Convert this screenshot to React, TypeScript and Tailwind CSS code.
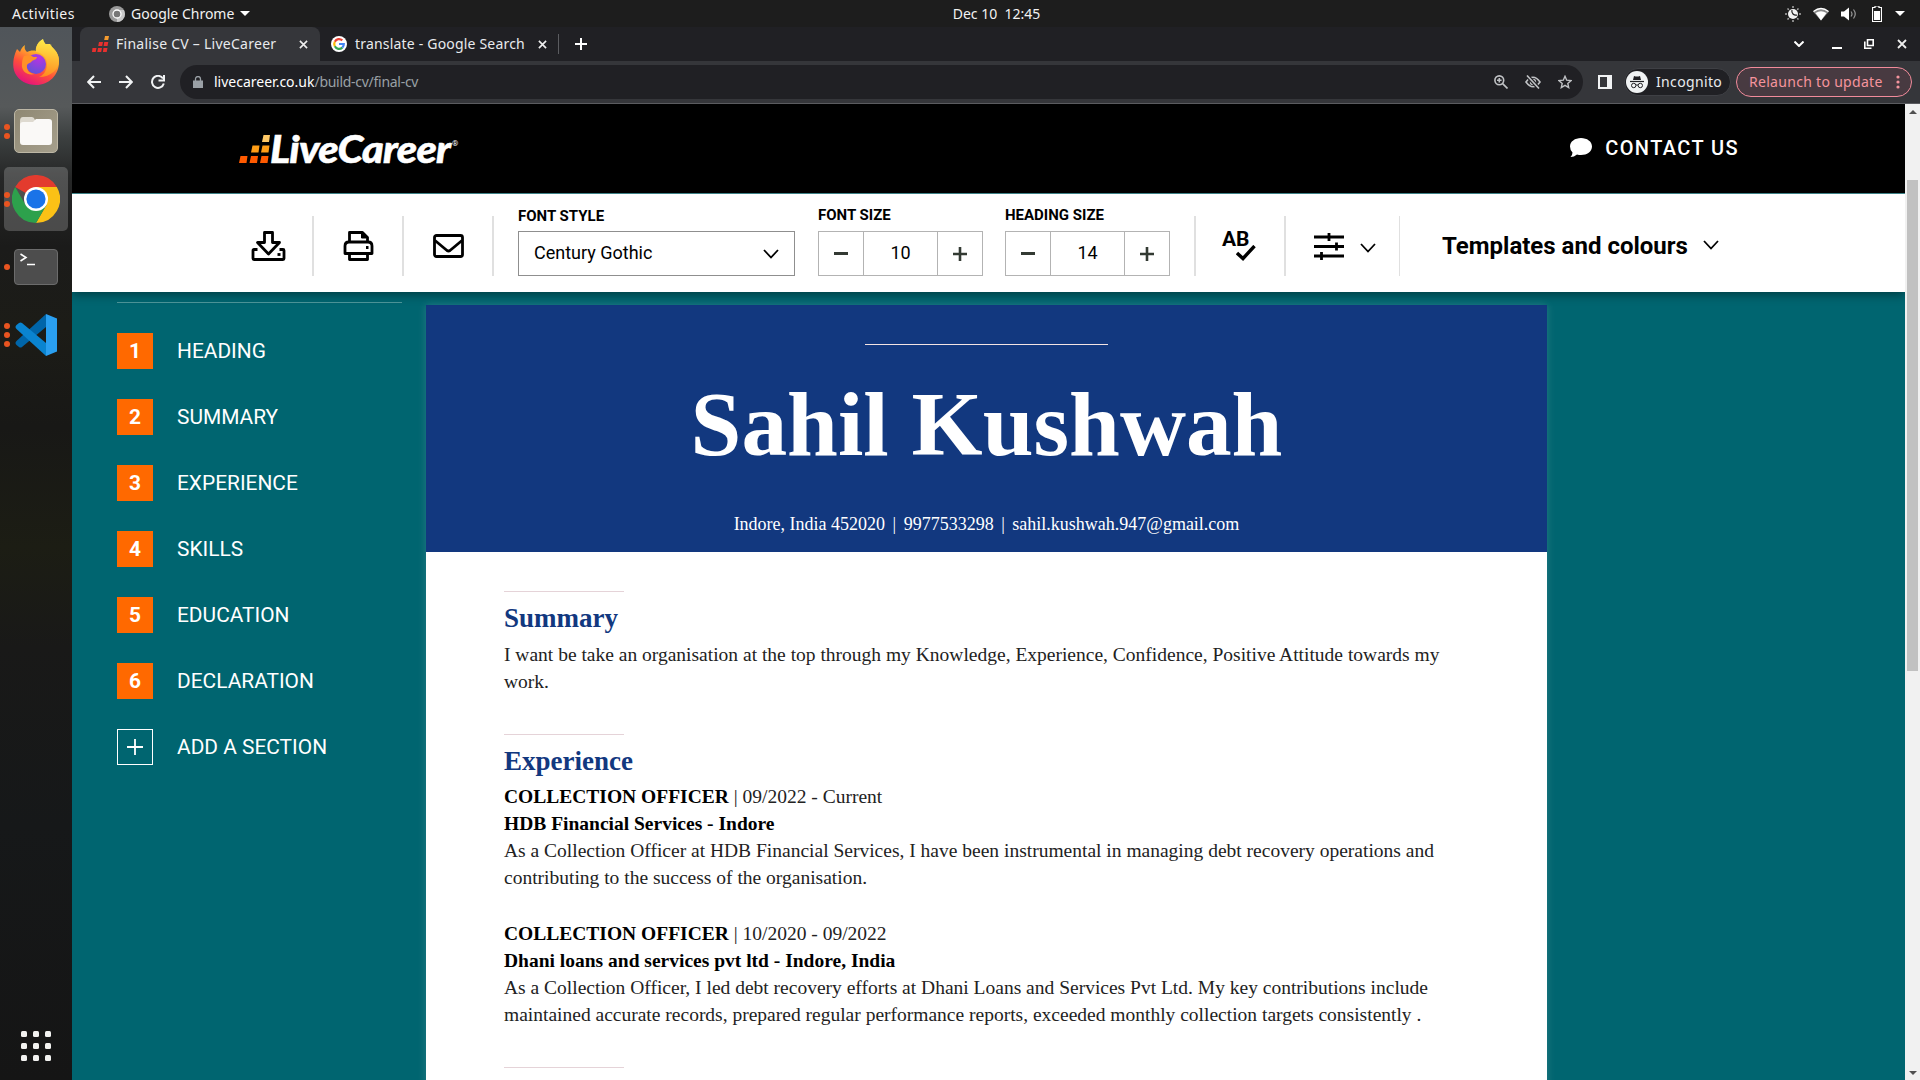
import React from "react";

const UI = "font-['Noto_Sans',sans-serif]";

const sections = ["HEADING", "SUMMARY", "EXPERIENCE", "SKILLS", "EDUCATION", "DECLARATION"];

function Chevron({ className }: { className?: string }) {
  return (
    <svg viewBox="0 0 16 10" className={className} fill="none" stroke="currentColor" strokeWidth="1.800">
      <path d="M1 1l7 7.5L15 1" />
    </svg>
  );
}

function Dots({ n }: { n: number }) {
  return (
    <div className="absolute left-[4px] top-0 bottom-0 flex flex-col justify-center gap-[3px]">
      {Array.from({ length: n }, (_, i) => (
        <i key={i} className="block size-[6px] rounded-full bg-[#e95420]" />
      ))}
    </div>
  );
}

function Dock() {
  return (
    <aside className="relative flex w-[72px] shrink-0 flex-col items-center bg-[linear-gradient(180deg,#50555a_0px,#56595a_80px,#3c4040_110px,#262727_150px,#1b1b1a_220px,#1c1c17_300px,#181816_400px,#1c1d14_520px,#191918_620px,#161819_800px,#151515_1053px)]">
      <div className="flex h-[72px] items-center justify-center">
        <svg viewBox="0 0 48 48" className="size-[48px]">
          <defs>
            <linearGradient id="fx" x1="0.8" y1="0" x2="0.3" y2="1">
              <stop offset="0" stopColor="#fff44f" />
              <stop offset=".35" stopColor="#ffb02a" />
              <stop offset=".65" stopColor="#ff4f3a" />
              <stop offset="1" stopColor="#e3107f" />
            </linearGradient>
            <linearGradient id="fy" x1="0.6" y1="0" x2="0.5" y2="1">
              <stop offset="0" stopColor="#fff04a" />
              <stop offset="1" stopColor="#ff8a20" />
            </linearGradient>
            <radialGradient id="fp" cx=".65" cy=".2" r=".9">
              <stop offset="0" stopColor="#b833e1" />
              <stop offset="1" stopColor="#5b54d6" />
            </radialGradient>
          </defs>
          <path d="M5 10c-4 8-5 17-2 24 4 8 12 12 21 12 13 0 23-10 23-23 0-6-2-10-5-13-2-2-4-4-4-5l-6 0C30 6 30 2 31 0c-5 3-7 7-7 12-3-1-7 0-9 1-2-2-3-4-2-7-3 2-4 4-5 7-1-1-2-2-3-3z" fill="url(#fx)" />
          <path d="M31 0c-5 3-8 8-7 13 7 1 11 6 11 12 0 8-5 12-8 13 12 0 20-8 20-16 0-6-3-10-6-13-1-1-2-2-2-4-1 1-1 2-1 4-3-2-6-5-7-9z" fill="url(#fy)" />
          <circle cx="24" cy="25" r="10" fill="url(#fp)" />
          <path d="M12 17c3-1 8-1 9 1h4c0 2-3 3-5 4-1 2-4 2-5 4-1 5 3 9 8 9-9 2-14-4-13-10 0-4 1-6 2-8z" fill="#ff9128" />
        </svg>
      </div>
      <div className="relative flex h-[64px] w-full items-center justify-center">
        <Dots n={2} />
        <div className="flex h-[44px] w-[44px] items-center justify-center rounded-[5px] border border-[#bdb7a5] bg-[linear-gradient(135deg,#8f8873,#a59f8c)]">
          <svg viewBox="0 0 32 28" className="h-[28px] w-[32px]">
            <path d="M0 4q0-4 3-4h9q2 0 3 3l1 2h13v16H0z" fill="#dedad0" />
            <path d="M0 8q0-3 3-3h10l3-3h13q3 0 3 3v20q0 3-3 3H3q-3 0-3-3z" fill="#faf9f7" />
          </svg>
        </div>
      </div>
      <div className="relative mt-[4px] flex h-[64px] w-full items-center justify-center">
        <div className="flex size-[64px] items-center justify-center rounded-[5px] bg-white/20">
          <svg viewBox="0 0 48 48" className="size-[48px]">
            <path d="M24 24L3.2 12A24 24 0 0 1 44.8 12z" fill="#e33b2e" />
            <path d="M24 12h20.8A24 24 0 0 1 24 48l10.4-18z" fill="#fbc116" />
            <path d="M13.6 30L3.2 12A24 24 0 0 0 24 48l10.4-18z" fill="#2da14c" />
            <circle cx="24" cy="24" r="12" fill="#fff" />
            <circle cx="24" cy="24" r="9.6" fill="#1a73e8" />
          </svg>
        </div>
        <Dots n={2} />
      </div>
      <div className="relative mt-[4px] flex h-[64px] w-full items-center justify-center">
        <Dots n={1} />
        <div className="h-[36px] w-[44px] rounded-[4px] border border-[#6c6c6c] bg-[#4d4d4d]">
          <svg viewBox="0 0 42 34" className="h-[34px] w-[42px]" fill="none" stroke="#fff" strokeWidth="1.6">
            <path d="M5.500 4l5.500 3.500L5.500 11M12 14.500h8" />
          </svg>
        </div>
      </div>
      <div className="relative mt-[4px] flex h-[64px] w-full items-center justify-center">
        <Dots n={3} />
        <svg viewBox="0 0 42 42" className="size-[42px]">
          <path d="M31 0L1.500 27q-2 2 0 4l2.500 2q1.500 1 3 0L31 13z" fill="#0065a9" />
          <path d="M31 42L1.500 15q-2-2 0-4L4 9q1.500-1 3 0l24 20z" fill="#0a84d0" />
          <path d="M31 0l11 4.500v33L31 42z" fill="#2a9ff0" />
        </svg>
      </div>
      <div className="mt-auto mb-[19px] grid grid-cols-3 gap-[6px]">
        {Array.from({ length: 9 }, (_, i) => (
          <i key={i} className="block size-[6px] rounded-[1.5px] bg-[#f2f2f0]" />
        ))}
      </div>
    </aside>
  );
}

function TopBar() {
  return (
    <header className={`${UI} grid h-[27px] grid-cols-3 items-center bg-[#1d1d1d] text-[14px] text-[#f2f2f2]`}>
      <div className="flex items-center pl-[12px]">
        <span className="w-[97px] whitespace-nowrap tracking-[0.45px]">Activities</span>
        <svg viewBox="0 0 16 16" className="size-[16px]">
          <circle cx="8" cy="8" r="8" fill="#9a9a9a" />
          <path d="M8 16A8 8 0 0 0 16 8l-1-4H8z" fill="#c9c9c9" />
          <circle cx="8" cy="8" r="4" fill="#777" stroke="#fff" strokeWidth="1.300" />
        </svg>
        <span className="ml-[6px] whitespace-nowrap">Google Chrome</span>
        <i className="ml-[6px] border-x-[5px] border-t-[5px] border-x-transparent border-t-white" />
      </div>
      <div className="pb-px pl-[73px] text-center whitespace-pre">Dec 10  12:45</div>
      <div className="flex items-center justify-end pr-[15px]">
        <svg viewBox="0 0 16 16" className="mr-[12px] size-[16px]">
          <circle cx="8" cy="8" r="5" fill="#f2f2f2" />
          <path d="M7 4a4 4 0 0 0 5 5" fill="none" stroke="#1d1d1d" strokeWidth="1.200" />
          <path d="M8 0v2M8 14v2M0 8h2M14 8h2M2.500 2.500l1.300 1.300M12.200 12.200l1.300 1.300M2.500 13.500l1.300-1.300M12.200 3.800l1.300-1.300" stroke="#aaa" strokeWidth="1.500" />
        </svg>
        <svg viewBox="0 0 16 14" className="mr-[12px] h-[14px] w-[16px]">
          <path d="M0 4.500Q8-2 16 4.500L8 13.500z" fill="#888" />
          <path d="M2.500 6Q8 2.500 13.500 6L8 13.500z" fill="#fff" />
          <path d="M.5 4.500Q8-1.500 15.500 4.500" fill="none" stroke="#fff" strokeWidth="1.300" />
        </svg>
        <svg viewBox="0 0 16 14" className="mr-[15px] h-[14px] w-[16px]">
          <path d="M0 4.500h3L8 .5v13L3 9.500H0z" fill="#fff" />
          <path d="M10 4.500q2 2.500 0 5M12.500 2.500q3.500 4.500 0 9" fill="none" stroke="#999" strokeWidth="1.200" />
        </svg>
        <svg viewBox="0 0 10 16" className="mr-[13px] h-[16px] w-[10px]">
          <path d="M3 0h4v1.500h2.500v14h-9v-14H3z" fill="none" stroke="#fff" strokeWidth="1.200" />
          <path d="M2 5h6v9H2z" fill="#fff" />
        </svg>
        <i className="border-x-[5px] border-t-[5px] border-x-transparent border-t-white" />
      </div>
    </header>
  );
}

function X({ className }: { className?: string }) {
  return (
    <svg viewBox="0 0 10 10" className={className} stroke="#eee" strokeWidth="1.800">
      <path d="M1 1l8 8M9 1L1 9" />
    </svg>
  );
}

function TabStrip() {
  return (
    <div className={`${UI} flex h-[34px] items-center bg-[#202024] pl-[8px] text-[14px] text-[#e8eaed]`}>
      <div className="flex h-full w-[240px] items-center rounded-t-[8px] bg-[#35363a] pl-[12px]">
        <svg viewBox="0 0 17 16" className="mr-[7px] h-[16px] w-[17px]" fill="#e8302e">
          <path d="M.5 12h4l-.8 4H0zM6 12h4l-.8 4H5.300zM11.500 12h4l-.8 4h-3.800zM7 6h4l-.8 4H6.200zM12.300 6h4l-.8 4h-3.900z" />
          <path d="M13 0h4l-.8 4h-4z" fill="#f59b2f" />
        </svg>
        <span className="w-[183px] pb-[2px] whitespace-nowrap tracking-[0.26px]">Finalise CV – LiveCareer</span>
        <X className="size-[9px]" />
      </div>
      <svg viewBox="0 0 16 16" className="ml-[11px] size-[16px]">
        <circle cx="8" cy="8" r="8" fill="#fff" />
        <g fill="none" strokeWidth="2.200">
          <path d="M11.300 4.400A4.800 4.800 0 0 0 3.800 5.700" stroke="#ea4335" />
          <path d="M3.800 5.700A4.800 4.800 0 0 0 3.800 10.300" stroke="#fbbc05" />
          <path d="M3.800 10.300A4.800 4.800 0 0 0 11.300 11.600" stroke="#34a853" />
          <path d="M11.300 11.600A4.800 4.800 0 0 0 12.800 8H8" stroke="#4285f4" />
        </g>
      </svg>
      <span className="ml-[8px] w-[183px] pb-[2px] whitespace-nowrap tracking-[0.19px]">translate - Google Search</span>
      <X className="size-[9px]" />
      <i className="ml-[11px] h-[20px] w-px bg-[#5b5c60]" />
      <svg viewBox="0 0 12 12" className="ml-[16px] size-[12px]" stroke="#fff" strokeWidth="2"><path d="M6 0v12M0 6h12" /></svg>
      <div className="ml-auto flex items-center pr-[13px]">
        <svg viewBox="0 0 10 6" className="mr-[28px] h-[6px] w-[10px]" fill="none" stroke="#fff" strokeWidth="2"><path d="M.5.500L5 5 9.500.500" /></svg>
        <i className="mt-[8px] mr-[22px] h-[2px] w-[10px] bg-white" />
        <svg viewBox="0 0 10 10" className="mr-[23px] size-[10px]" fill="none" stroke="#fff" strokeWidth="1.600"><path d="M3.500.800h5.700v5.700H3.500zM.800 2.500v6.700H7.500" /></svg>
        <X className="size-[10px]" />
      </div>
    </div>
  );
}

function AddressBar() {
  return (
    <div className={`${UI} flex h-[43px] items-center border-b border-[#5b5c60] bg-[#35363a] pl-[15px] text-[14px] text-[#e8eaed]`}>
      <svg viewBox="0 0 14 14" className="size-[14px]" fill="none" stroke="#f1f3f4" strokeWidth="2"><path d="M14 7H1.500M7 1L1.200 7 7 13" /></svg>
      <svg viewBox="0 0 14 14" className="ml-[18px] size-[14px]" fill="none" stroke="#f1f3f4" strokeWidth="2"><path d="M0 7h12.500M7 1l5.800 6L7 13" /></svg>
      <svg viewBox="0 0 14 14" className="ml-[18px] size-[14px]" fill="none" stroke="#f1f3f4" strokeWidth="2"><path d="M12 3.500A6 6 0 1 0 12.800 8.500M13 0v5.500H7.500" /></svg>
      <div className="ml-[15px] flex h-[34px] w-[1403px] items-center rounded-full bg-[#202024] pl-[13px] pr-[11px]">
        <svg viewBox="0 0 10 12" className="h-[12px] w-[10px]"><path d="M0 4.500h10V12H0z" fill="#9aa0a6" /><path d="M2.500 5V3a2.500 2.500 0 0 1 5 0v2" fill="none" stroke="#9aa0a6" strokeWidth="1.300" /></svg>
        <span className="ml-[11px] pb-[2px] whitespace-nowrap text-white">livecareer.co.uk</span>
        <span className="pb-[2px] whitespace-nowrap tracking-[-0.28px] text-[#9aa0a6]">/build-cv/final-cv</span>
        <svg viewBox="0 0 14 14" className="ml-auto size-[14px]" fill="none" stroke="#c0c2c5" strokeWidth="1.600"><circle cx="5.300" cy="5.300" r="4.400" /><path d="M8.600 8.600l4.900 4.900M3 5.300h4.600M5.300 3v4.600" /></svg>
        <svg viewBox="0 0 16 14" className="ml-[17px] h-[14px] w-[16px]" fill="none" stroke="#c0c2c5" strokeWidth="1.600"><path d="M1 7Q8-2.500 15 7 8 16.500 1 7z" /><circle cx="8" cy="7" r="2.400" /><path d="M2 .5l12 13" stroke="#202024" strokeWidth="4" /><path d="M2 .5l12 13" /></svg>
        <svg viewBox="0 0 14 14" className="ml-[17px] size-[14px]" fill="none" stroke="#c0c2c5" strokeWidth="1.400"><path d="M7 1.300l1.700 3.900 4.300.4-3.200 2.800.9 4.200L7 10.400l-3.700 2.200.9-4.200L1 5.600l4.300-.4z" /></svg>
      </div>
      <svg viewBox="0 0 14 14" className="ml-[15px] size-[14px]"><path d="M0 0h14v14H0zM2 2v10h7V2z" fillRule="evenodd" fill="#f1f3f4" /></svg>
      <div className="ml-[12px] flex h-[28px] w-[107px] items-center rounded-full border border-[#3f4045] bg-[#202024] pl-px">
        <svg viewBox="0 0 22 22" className="size-[22px]"><circle cx="11" cy="11" r="11" fill="#f1f3f4" /><path d="M7 9l1-4q3 1 6 0l1 4z" fill="#202024" /><path d="M4 10.500h14" stroke="#202024" strokeWidth="1.200" /><g fill="none" stroke="#202024"><circle cx="7.700" cy="14.500" r="2.200" /><circle cx="14.300" cy="14.500" r="2.200" /><path d="M9.900 14h2.200" /></g></svg>
        <span className="ml-[8px] pb-[2px] whitespace-nowrap tracking-[0.35px]">Incognito</span>
      </div>
      <div className="ml-[5px] flex h-[30px] w-[176px] items-center rounded-full border border-[#f28b9b] bg-[#483a41] pl-[12px] text-[#f5949d]">
        <span className="pb-[2px] whitespace-nowrap tracking-[0.3px]">Relaunch to update</span>
        <svg viewBox="0 0 4 14" className="ml-auto mr-[11px] h-[14px] w-[4px]" fill="#f5949d"><circle cx="2" cy="2" r="1.600" /><circle cx="2" cy="7" r="1.600" /><circle cx="2" cy="12" r="1.600" /></svg>
      </div>
    </div>
  );
}

function SiteHeader() {
  return (
    <div className="flex h-[89px] items-center bg-black pl-[167px] pr-[166px] text-white">
      <svg viewBox="0 0 31 28" className="h-[28px] w-[31px]">
        <path d="M1.500 21h7l-1 7H0zM12 21h7l-1 7h-7.500zM22.500 21h7l-1 7H21z" fill="#ff5a00" />
        <path d="M13.500 10.500h7l-1 7H12zM23.500 10.500h7l-1 7h-7.500z" fill="#ff9e16" />
        <path d="M24.500 0h6.500l-1 7h-7z" fill="#ffc966" />
      </svg>
      <span className="w-[161px] origin-left scale-x-[1.125] whitespace-nowrap font-['Lato',sans-serif] text-[37px] font-black leading-none tracking-[-0.7px] italic [-webkit-text-stroke:0.5px_white]">LiveCareer</span>
      <span className="mb-[9px] ml-[21px] font-['Roboto',sans-serif] text-[8px]">®</span>
      <svg viewBox="0 0 22 19" className="mb-[2px] ml-auto h-[19px] w-[22px]" fill="#fff"><path d="M11 0c6 0 11 3.500 11 8.500S17 17 11 17q-2 0-4-.6Q4 19 .5 19q2-2 2-4.500Q0 12 0 8.500C0 3.500 5 0 11 0z" /></svg>
      <span className="mb-[2px] ml-[13px] whitespace-nowrap font-['Roboto',sans-serif] text-[20px] font-medium tracking-[1.4px]">CONTACT US</span>
    </div>
  );
}

function Stepper({ label, value }: { label: string; value: number }) {
  return (
    <div className="flex flex-col">
      <span className="flex h-[20px] items-center self-start whitespace-nowrap text-[15px] font-bold">{label}</span>
      <div className="mt-[6px] flex h-[45px] w-[165px] items-stretch border border-[#b3b3b3]">
        <div className="flex w-[45px] items-center justify-center border-r border-[#b3b3b3]"><i className="h-[3px] w-[14px] bg-[#333a33]" /></div>
        <div className="flex flex-1 items-center justify-center pb-[2px] text-[18px]">{value}</div>
        <div className="flex w-[45px] items-center justify-center border-l border-[#b3b3b3]">
          <svg viewBox="0 0 14 14" className="size-[14px]" stroke="#333a33" strokeWidth="2.600"><path d="M7 0v14M0 7h14" /></svg>
        </div>
      </div>
    </div>
  );
}

function Toolbar() {
  return (
    <div className="relative z-10 flex h-[99px] items-start border-t border-[#3d8186] bg-white pl-[179px] font-['Roboto',sans-serif] text-black shadow-[0_2px_10px_rgba(0,0,0,0.45)]">
      <div className="mt-[22px] flex h-[60px] items-center">
        <svg viewBox="0 0 34 30" className="h-[30px] w-[35px]" fill="none" stroke="#000" strokeWidth="2.800" strokeLinejoin="round">
          <path d="M6 18.500H2.500q-1 0-1 1v8q0 1 1 1h29q1 0 1-1v-8q0-1-1-1H28" />
          <path d="M13 1.500h8v10h7L17 23 6 11.500h7z" />
          <path d="M26 23.500h3" />
        </svg>
        <i className="ml-[26px] h-[60px] w-[2px] bg-[#e0e0e0]" />
        <svg viewBox="0 0 30 30" className="ml-[29px] h-[30px] w-[31px]" fill="none" stroke="#000" strokeWidth="2.800" strokeLinejoin="round">
          <path d="M6 11V1.500h13L24 6.500V11" />
          <path d="M18 1.500V7h6.500z" fill="#000" strokeWidth="1" />
          <path d="M6 22.500H1.500V15q0-4 4-4h19q4 0 4 4v7.500H24" />
          <path d="M6 22.500h18v6H6zM22.500 16.500h2.500" />
        </svg>
        <i className="ml-[28px] h-[60px] w-[2px] bg-[#e0e0e0]" />
        <svg viewBox="0 0 31 24" className="mb-px ml-[29px] h-[24px] w-[31px]" fill="none" stroke="#000" strokeWidth="2.800" strokeLinejoin="round">
          <rect x="1.500" y="1.500" width="28" height="21" rx="2" />
          <path d="M2 6.500l12 10q1.500 1 3 0l12-10" />
        </svg>
        <i className="ml-[28px] h-[60px] w-[2px] bg-[#e0e0e0]" />
      </div>
      <div className="ml-[24px] mt-[12px] flex flex-col">
        <span className="flex h-[20px] items-center self-start whitespace-nowrap text-[15px] font-bold">FONT STYLE</span>
        <div className="mt-[5px] flex h-[45px] w-[277px] items-center justify-between border border-[#8f8f8f] pl-[15px] pr-[15px] text-[18px]">
          <span className="pb-[2px] whitespace-nowrap">Century Gothic</span>
          <Chevron className="h-[10px] w-[16px]" />
        </div>
      </div>
      <div className="ml-[23px] mt-[11px] flex gap-[22px]">
        <Stepper label="FONT SIZE" value={10} />
        <Stepper label="HEADING SIZE" value={14} />
      </div>
      <div className="mt-[22px] flex h-[60px] items-center">
        <i className="ml-[24px] h-[60px] w-[2px] bg-[#e0e0e0]" />
        <div className="relative ml-[26px] h-[30px] w-[34px]">
          <span className="absolute left-0 top-[-4px] text-[21px] font-bold leading-[24px]">AB</span>
          <svg viewBox="0 0 20 16" className="absolute bottom-0 right-0 h-[16px] w-[20px]" fill="none" stroke="#000" strokeWidth="3.400"><path d="M1 8l6 5.500L18.500 1" /></svg>
        </div>
        <i className="ml-[28px] h-[60px] w-[2px] bg-[#e0e0e0]" />
        <svg viewBox="0 0 30 27" className="ml-[28px] h-[27px] w-[30px]" fill="none" stroke="#000" strokeWidth="2.800"><path d="M0 4h30M0 13.500h30M0 23h30M15 0v8M22.500 9.500v8M7.500 19v8" /></svg>
        <Chevron className="mt-[3px] ml-[16px] h-[10px] w-[16px]" />
        <i className="ml-[23px] h-[60px] w-px bg-[#e0e0e0]" />
        <span className="ml-[42px] whitespace-nowrap text-[24px] font-bold">Templates and colours</span>
        <Chevron className="mb-[2px] ml-[15px] h-[10px] w-[16px]" />
      </div>
    </div>
  );
}

function Sidebar() {
  return (
    <nav className="mt-[10px] ml-[45px] w-[285px] border-t border-[#4d959a] pt-[30px] font-['Roboto',sans-serif] text-[20.9px] text-white">
      {sections.map((s, i) => (
        <div key={s} className="mb-[30px] flex h-[36px] items-center">
          <div className="flex size-[36px] items-center justify-center bg-[#ff6900] pt-[2px] font-bold">{i + 1}</div>
          <span className="ml-[24px] pt-[2px]">{s}</span>
        </div>
      ))}
      <div className="flex h-[36px] items-center">
        <div className="flex size-[36px] items-center justify-center border border-white">
          <svg viewBox="0 0 16 16" className="size-[16px]" stroke="#fff" strokeWidth="1.800"><path d="M8 0v16M0 8h16" /></svg>
        </div>
        <span className="ml-[24px] pt-[2px]">ADD A SECTION</span>
      </div>
    </nav>
  );
}

function Rule() {
  return <div className="h-px w-[120px] bg-[#e5d3d8]" />;
}

function Resume() {
  return (
    <main className="mt-[13px] ml-[24px] h-[900px] w-[1121px] bg-white font-['Liberation_Serif',serif] shadow-[0_0_8px_rgba(255,255,255,0.15)]">
      <div className="flex h-[247px] flex-col items-center bg-[#12387f] text-white">
        <div className="mt-[39px] h-px w-[243px] bg-[#f3e3e3]" />
        <h1 className="mt-[28px] whitespace-nowrap text-[91.4px] font-bold leading-[104px]">Sahil Kushwah</h1>
        <p className="mt-[36px] whitespace-pre text-[18px] leading-[22px]">Indore, India 452020<span className="mx-[7.5px]">|</span>9977533298<span className="mx-[7.5px]">|</span>sahil.kushwah.947@gmail.com</p>
      </div>
      <div className="pl-[78px] pt-[39px] text-[19.5px] leading-[27px] whitespace-nowrap text-[#222]">
        <Rule />
        <h2 className="flex h-[49px] items-center pt-[3px] text-[27px] font-bold text-[#12387f]">Summary</h2>
        <p>I want be take an organisation at the top through my Knowledge, Experience, Confidence, Positive Attitude towards my<br />work.</p>
        <div className="h-[39px]" />
        <Rule />
        <h2 className="flex h-[48px] items-center pt-[4px] text-[27px] font-bold text-[#12387f]">Experience</h2>
        <p><b className="text-black">COLLECTION OFFICER</b> | 09/2022 - Current</p>
        <p><b className="text-black">HDB Financial Services - Indore</b></p>
        <p>As a Collection Officer at HDB Financial Services, I have been instrumental in managing debt recovery operations and<br />contributing to the success of the organisation.</p>
        <div className="h-[29px]" />
        <p><b className="text-black">COLLECTION OFFICER</b> | 10/2020 - 09/2022</p>
        <p><b className="text-black">Dhani loans and services pvt ltd - Indore, India</b></p>
        <p>As a Collection Officer, I led debt recovery efforts at Dhani Loans and Services Pvt Ltd. My key contributions include<br />maintained accurate records, prepared regular performance reports, exceeded monthly collection targets consistently .</p>
        <div className="h-[39px]" />
        <Rule />
      </div>
    </main>
  );
}

function Scrollbar() {
  return (
    <div className="flex w-[15px] flex-col items-center bg-[#f1f1f1]">
      <i className="mt-[6px] border-x-[4px] border-b-[4px] border-x-transparent border-b-[#505050]" />
      <div className="mt-[66px] h-[491px] w-[11px] bg-[#c1c1c1]" />
      <i className="mt-auto mb-[5px] border-x-[4px] border-t-[4px] border-x-transparent border-t-[#505050]" />
    </div>
  );
}

export default function App() {
  return (
    <div className="flex h-[1080px] w-[1920px] flex-col overflow-hidden">
      <TopBar />
      <div className="flex min-h-0 flex-1">
        <Dock />
        <div className="flex min-w-0 flex-1 flex-col">
          <TabStrip />
          <AddressBar />
          <div className="flex min-h-0 flex-1">
            <div className="flex min-w-0 flex-1 flex-col overflow-hidden">
              <SiteHeader />
              <Toolbar />
              <div className="flex min-h-0 flex-1 items-start overflow-hidden bg-[#006570]">
                <Sidebar />
                <Resume />
              </div>
            </div>
            <Scrollbar />
          </div>
        </div>
      </div>
    </div>
  );
}
